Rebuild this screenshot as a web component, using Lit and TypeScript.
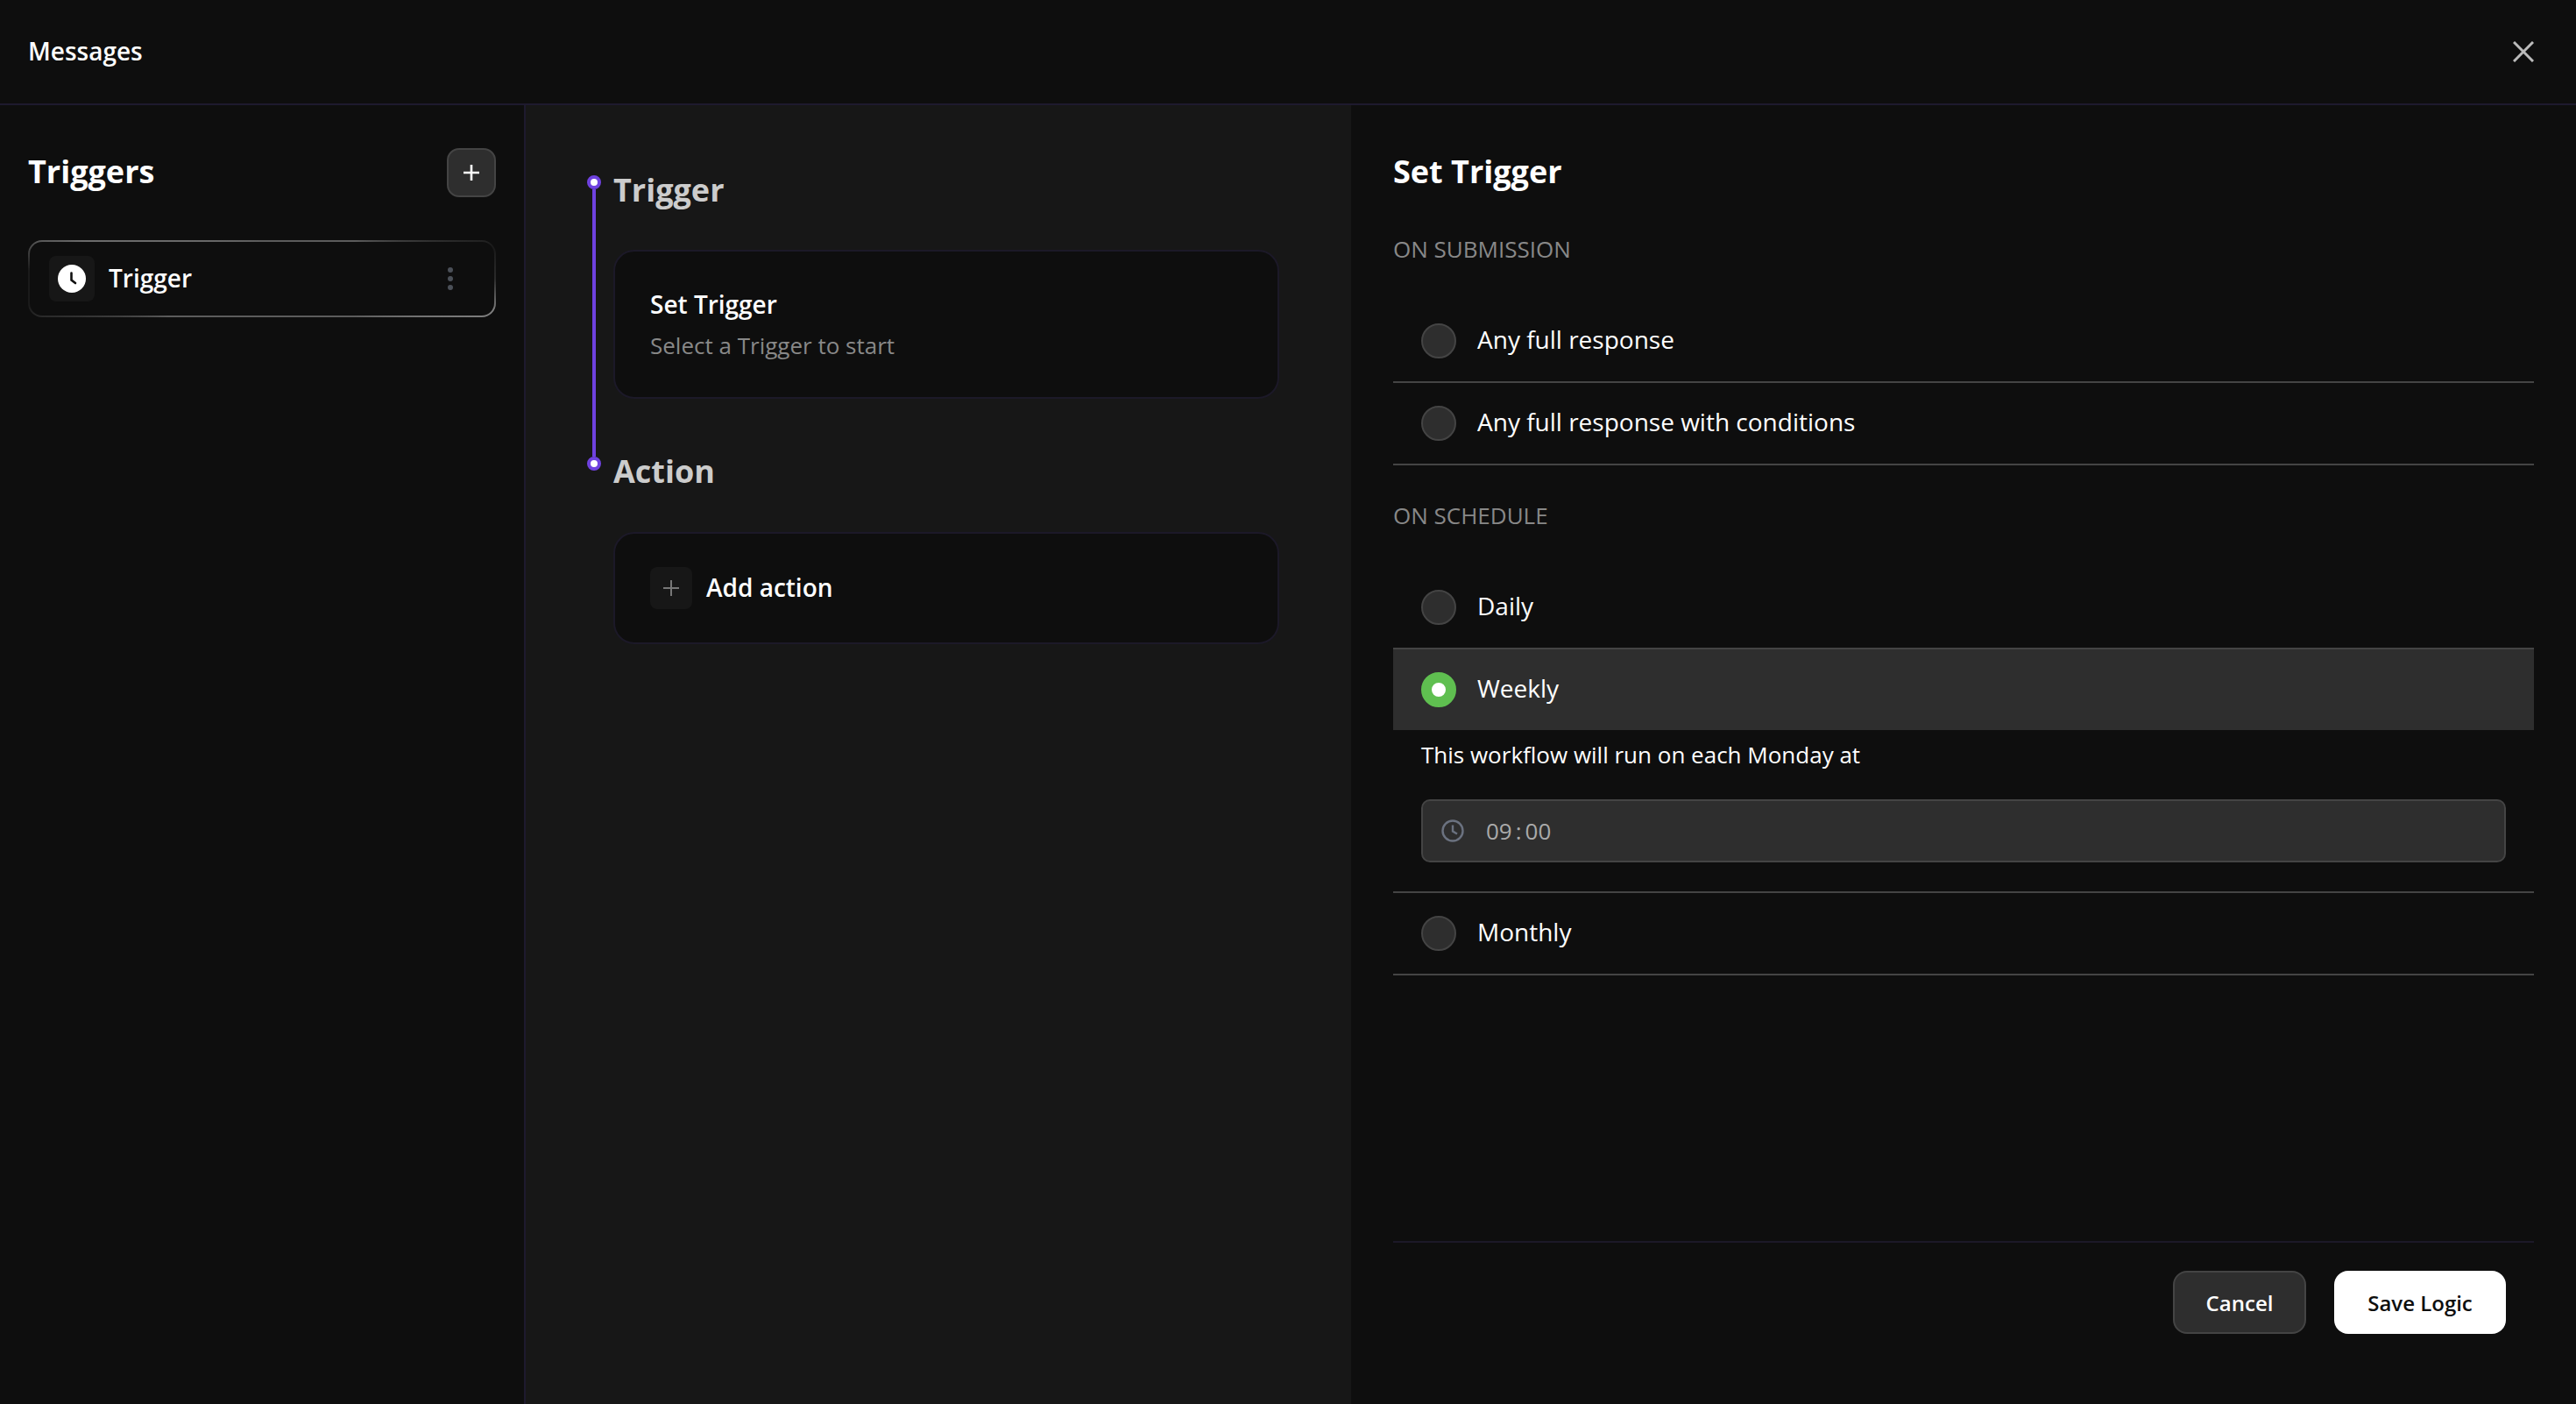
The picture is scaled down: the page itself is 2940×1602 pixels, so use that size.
import { LitElement, html, css } from 'lit';
import { customElement } from 'lit/decorators.js';

const OPTION_SUBMIT = ['Any full response', 'Any full response with conditions'];

@customElement('app-root')
export class AppRoot extends LitElement {
  static styles = css`
    :host {
      display: flex;
      flex-direction: column;
      height: 100vh;
      background: #0e0e0e;
      color: #fff;
      font-family: 'Open Sans', 'Noto Sans', sans-serif;
      font-size: 28px;
      overflow: hidden;
    }

    .topbar {
      flex: none;
      height: 118px;
      box-sizing: content-box;
      display: flex;
      align-items: center;
      justify-content: space-between;
      padding: 0 48px 0 32px;
      border-bottom: 2px solid #1e1a2e;
    }
    .topbar-title {
      font-size: 28px;
      font-weight: 600;
      padding-bottom: 2px;
    }
    .close {
      display: block;
      width: 24px;
      height: 24px;
    }

    .body {
      flex: 1;
      display: flex;
      min-height: 0;
    }

    /* left column */
    .side {
      flex: none;
      width: 598px;
      box-sizing: content-box;
      border-right: 2px solid #1e1a2e;
    }
    .side-inner {
      padding: 49px 32px 0;
    }
    .side-head {
      display: flex;
      align-items: center;
      justify-content: space-between;
    }
    .side-title {
      font-size: 36px;
      line-height: 48px;
      font-weight: 700;
      padding-bottom: 2px;
    }
    .add-btn {
      width: 56px;
      height: 56px;
      box-sizing: border-box;
      border-radius: 14px;
      background: #2e2e2e;
      border: 2px solid #444;
      display: flex;
      align-items: center;
      justify-content: center;
    }
    .trigger-card {
      margin-top: 49px;
      height: 88px;
      box-sizing: border-box;
      border: 2px solid transparent;
      border-radius: 16px;
      background:
        linear-gradient(#0e0e0e, #0e0e0e) padding-box,
        conic-gradient(
            #5c5c5c 0deg 68deg,
            #1a1a1a 82deg,
            #2a2a2a 90deg,
            #808080 98deg,
            #5c5c5c 112deg 248deg,
            #1a1a1a 264deg 272deg,
            #6c6c6c 282deg,
            #5c5c5c 360deg
          )
          border-box;
      display: flex;
      align-items: center;
      padding: 0 22px;
    }
    .trigger-icon {
      width: 52px;
      height: 52px;
      border-radius: 8px;
      background: #171717;
      display: flex;
      align-items: center;
      justify-content: center;
      flex: none;
    }
    .trigger-name {
      margin-left: 16px;
      flex: 1;
      font-size: 28px;
      font-weight: 600;
      padding-bottom: 2px;
    }
    .kebab {
      display: flex;
      flex-direction: column;
      gap: 4px;
      margin-right: 25px;
    }
    .kebab span {
      width: 6px;
      height: 6px;
      border-radius: 50%;
      background: #4b5058;
    }

    /* middle column */
    .flow {
      flex: none;
      width: 942px;
      box-sizing: border-box;
      background: #171717;
      display: flex;
      gap: 14px;
      padding: 73px 82px 0 70px;
    }
    .rail {
      flex: none;
      width: 16px;
      height: 337px;
      margin-top: 7px;
      display: flex;
      flex-direction: column;
      align-items: center;
    }
    .rail-dot {
      flex: none;
      width: 16px;
      height: 16px;
      box-sizing: border-box;
      border-radius: 50%;
      background: #fff;
      border: 4px solid #6f42e0;
    }
    .rail-line {
      flex: 1;
      width: 4px;
      background: #6f42e0;
    }
    .steps {
      flex: 1;
      min-width: 0;
    }
    .step-title {
      font-size: 36px;
      line-height: 48px;
      font-weight: 700;
      color: #ccc;
    }
    .step-card {
      box-sizing: border-box;
      background: #0e0e0e;
      border: 2px solid #1c1928;
      border-radius: 24px;
      padding: 0 40px;
    }
    .card-trigger {
      height: 170px;
      margin: 44px 0 59px;
      display: flex;
      flex-direction: column;
      justify-content: center;
      gap: 10px;
    }
    .card-action {
      height: 128px;
      margin-top: 45px;
      display: flex;
      align-items: center;
      gap: 16px;
    }
    .card-title {
      font-size: 28px;
      line-height: 38px;
      font-weight: 600;
    }
    .card-action .card-title {
      padding-bottom: 2px;
    }
    .card-sub {
      font-size: 26px;
      line-height: 36px;
      color: #888;
    }
    .plus-box {
      width: 48px;
      height: 48px;
      border-radius: 8px;
      background: #171717;
      display: flex;
      align-items: center;
      justify-content: center;
      flex: none;
    }

    /* right column */
    .panel {
      flex: 1;
      min-width: 0;
      display: flex;
      flex-direction: column;
      padding: 52px 48px 0;
    }
    .panel-scroll {
      flex: 1;
      min-height: 0;
    }
    .panel-title {
      font-size: 36px;
      line-height: 48px;
      font-weight: 700;
    }
    .group-label {
      font-size: 26px;
      line-height: 36px;
      color: #888;
      margin: 39px 0 41px;
    }
    .panel-title + .group-label {
      margin-top: 46px;
    }
    .option {
      height: 92px;
      box-sizing: content-box;
      display: flex;
      align-items: center;
      gap: 24px;
      padding-left: 32px;
      border-bottom: 2px solid #444;
      font-size: 28px;
    }
    .option-label {
      padding-bottom: 4px;
    }
    .option.selected {
      background: #2e2e2e;
      border-bottom: none;
    }
    .radio {
      flex: none;
      width: 40px;
      height: 40px;
      box-sizing: border-box;
      border-radius: 50%;
      background: #2e2e2e;
      border: 2px solid #444;
    }
    .selected .radio {
      background: #fff;
      border: 12px solid #5fbf50;
    }
    .option-detail {
      padding: 0 32px 33px;
      border-bottom: 2px solid #444;
    }
    .detail-text {
      font-size: 26px;
      line-height: 36px;
      margin-top: 10px;
    }
    .time-input {
      margin-top: 33px;
      height: 72px;
      box-sizing: border-box;
      background: #2e2e2e;
      border: 2px solid #444;
      border-radius: 10px;
      display: flex;
      align-items: center;
      gap: 24px;
      padding-left: 20px;
      font-size: 26px;
      color: #aaa;
    }
    .time-input svg {
      flex: none;
      display: block;
    }
    .colon {
      margin: 0 4px;
    }

    .footer {
      flex: none;
      display: flex;
      justify-content: flex-end;
      gap: 32px;
      padding: 32px 32px 80px 0;
      border-top: 2px solid #1c1928;
    }
    .btn {
      height: 72px;
      box-sizing: border-box;
      border-radius: 16px;
      font-size: 24px;
      font-weight: 600;
      display: flex;
      align-items: center;
      justify-content: center;
    }
    .btn-cancel {
      width: 152px;
      background: #2e2e2e;
      border: 2px solid #444;
      color: #fff;
    }
    .btn-save {
      width: 196px;
      background: #fff;
      color: #0e0e0e;
    }
  `;

  private option(label: string) {
    return html`<div class="option">
      <span class="radio"></span><span class="option-label">${label}</span>
    </div>`;
  }

  render() {
    return html`
      <div class="topbar">
        <span class="topbar-title">Messages</span>
        <svg class="close" viewBox="0 0 24 24" fill="none" stroke="#bbb" stroke-width="3">
          <path d="M1 1 23 23M23 1 1 23" />
        </svg>
      </div>
      <div class="body">
        <div class="side">
          <div class="side-inner">
            <div class="side-head">
              <span class="side-title">Triggers</span>
              <div class="add-btn">
                <svg width="20" height="20" viewBox="0 0 20 20" stroke="#fff" stroke-width="2.6">
                  <path d="M10 1V19M1 10H19" />
                </svg>
              </div>
            </div>
            <div class="trigger-card">
              <div class="trigger-icon">
                <svg width="32" height="32" viewBox="0 0 32 32" fill="none">
                  <circle cx="16" cy="16" r="16" fill="#fff" />
                  <path d="M15.5 9.5V17.5L20 21" stroke="#111" stroke-width="2.6" stroke-linecap="round" />
                </svg>
              </div>
              <span class="trigger-name">Trigger</span>
              <div class="kebab"><span></span><span></span><span></span></div>
            </div>
          </div>
        </div>

        <div class="flow">
          <div class="rail">
            <span class="rail-dot"></span>
            <span class="rail-line"></span>
            <span class="rail-dot"></span>
          </div>
          <div class="steps">
            <div class="step-title">Trigger</div>
            <div class="step-card card-trigger">
              <div class="card-title">Set Trigger</div>
              <div class="card-sub">Select a Trigger to start</div>
            </div>
            <div class="step-title">Action</div>
            <div class="step-card card-action">
              <div class="plus-box">
                <svg width="20" height="20" viewBox="0 0 20 20" stroke="#777" stroke-width="2">
                  <path d="M10 1V19M1 10H19" />
                </svg>
              </div>
              <span class="card-title">Add action</span>
            </div>
          </div>
        </div>

        <div class="panel">
          <div class="panel-scroll">
            <div class="panel-title">Set Trigger</div>
            <div class="group-label">ON SUBMISSION</div>
            ${OPTION_SUBMIT.map(o => this.option(o))}
            <div class="group-label">ON SCHEDULE</div>
            ${this.option('Daily')}
            <div class="option selected">
              <span class="radio"></span><span class="option-label">Weekly</span>
            </div>
            <div class="option-detail">
              <div class="detail-text">This workflow will run on each Monday at</div>
              <div class="time-input">
                <svg width="28" height="28" viewBox="0 0 28 28" fill="none" stroke="#6b7280" stroke-width="2.4">
                  <circle cx="14" cy="14" r="11.5" />
                  <path d="M14 7.5V14.5L19 17.5" />
                </svg>
                <span>09<span class="colon">:</span>00</span>
              </div>
            </div>
            ${this.option('Monthly')}
          </div>
          <div class="footer">
            <div class="btn btn-cancel">Cancel</div>
            <div class="btn btn-save">Save Logic</div>
          </div>
        </div>
      </div>
    `;
  }
}
